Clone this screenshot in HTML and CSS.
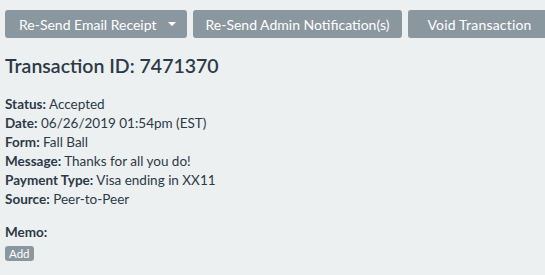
FILE: index.html
```html
<!DOCTYPE html>
<html>
<head>
<meta charset="utf-8">
<link rel="stylesheet" href="styles.css">
</head>
<body>
<div class="page">
  <div class="actions">
    <button class="btn btn-dropdown">Re-Send Email Receipt <span class="caret"></span></button>
    <button class="btn">Re-Send Admin Notification(s)</button>
    <button class="btn btn-wide">Void Transaction</button>
  </div>
  <h1 class="title">Transaction ID: 7471370</h1>
  <ul class="details">
    <li><b>Status:</b> Accepted</li>
    <li><b>Date:</b> 06/26/2019 01:54pm (EST)</li>
    <li><b>Form:</b> Fall Ball</li>
    <li><b>Message:</b> Thanks for all you do!</li>
    <li><b>Payment Type:</b> Visa ending in XX11</li>
    <li><b>Source:</b> Peer-to-Peer</li>
  </ul>
  <div class="memo">
    <div class="memo-label">Memo:</div>
    <button class="btn-small">Add</button>
  </div>
</div>
</body>
</html>
```
FILE: styles.css
```css
html, body {
  margin: 0;
  padding: 0;
  background: #edf0f1;
}
body {
  font-family: Lato, "Open Sans", sans-serif;
  color: #2b3a46;
}
.page {
  padding: 10px 5px;
}
.actions {
  display: flex;
  gap: 6px;
}
.btn {
  font-family: inherit;
  font-size: 14px;
  color: #fff;
  background: #8a979f;
  border: none;
  border-radius: 3px;
  height: 28px;
  padding: 0 13px;
  display: flex;
  align-items: center;
  gap: 11px;
  white-space: nowrap;
  flex-shrink: 0;
}
.btn-dropdown {
  padding: 0 11px 0 14px;
}
.btn-wide {
  padding: 0 17px 0 19px;
  letter-spacing: 0.2px;
}
.caret {
  width: 0;
  height: 0;
  border-left: 4px solid transparent;
  border-right: 4px solid transparent;
  border-top: 4px solid #fff;
}
.title {
  font-size: 19.5px;
  font-weight: 600;
  margin: 16px 0 17px;
  line-height: 24px;
}
.details {
  list-style: none;
  margin: 0;
  padding: 0;
  font-size: 13.5px;
  line-height: 19px;
}
.details b {
  font-weight: 700;
}
.memo {
  margin-top: 14px;
}
.memo-label {
  font-size: 13.5px;
  font-weight: 700;
  line-height: 19px;
}
.btn-small {
  font-family: inherit;
  font-size: 11.5px;
  line-height: 15px;
  color: #fff;
  background: #8a979f;
  border: none;
  border-radius: 3px;
  padding: 0 4px;
  margin-top: 4px;
}
```
